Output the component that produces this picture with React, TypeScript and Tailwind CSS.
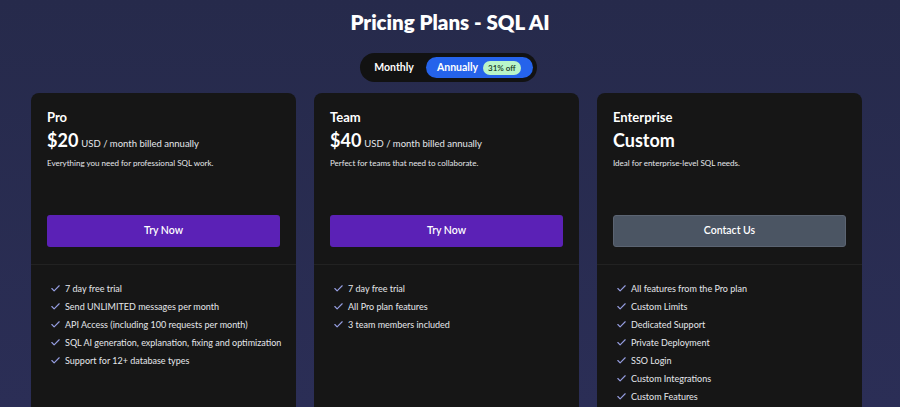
import { Check } from "lucide-react";

type Plan = {
  name: string;
  price: string;
  suffix?: string;
  blurb: string;
  cta: string;
  ctaClass: string;
  features: string[];
};

const plans: Plan[] = [
  {
    name: "Pro",
    price: "$20",
    suffix: "USD / month billed annually",
    blurb: "Everything you need for professional SQL work.",
    cta: "Try Now",
    ctaClass: "bg-[#5b21b6] text-white",
    features: [
      "7 day free trial",
      "Send UNLIMITED messages per month",
      "API Access (including 100 requests per month)",
      "SQL AI generation, explanation, fixing and optimization",
      "Support for 12+ database types",
    ],
  },
  {
    name: "Team",
    price: "$40",
    suffix: "USD / month billed annually",
    blurb: "Perfect for teams that need to collaborate.",
    cta: "Try Now",
    ctaClass: "bg-[#5b21b6] text-white",
    features: ["7 day free trial", "All Pro plan features", "3 team members included"],
  },
  {
    name: "Enterprise",
    price: "Custom",
    blurb: "Ideal for enterprise-level SQL needs.",
    cta: "Contact Us",
    ctaClass: "bg-[#4b5563] text-white border border-[#5b6472]",
    features: [
      "All features from the Pro plan",
      "Custom Limits",
      "Dedicated Support",
      "Private Deployment",
      "SSO Login",
      "Custom Integrations",
      "Custom Features",
    ],
  },
];

function PlanCard({ plan }: { plan: Plan }) {
  return (
    <div className="w-[265px] h-[330px] shrink-0 rounded-lg bg-[#161616] overflow-hidden">
      <div className="px-4 pt-[15px]">
        <h3 className="text-[13px] font-bold leading-[18px] text-white">{plan.name}</h3>
        <div className="mt-[2px] flex items-baseline gap-[3px] text-white">
          <span className="text-[18px] font-bold leading-[24px]">{plan.price}</span>
          {plan.suffix && <span className="text-[9.5px] text-gray-200">{plan.suffix}</span>}
        </div>
        <p className="mt-[5px] text-[8px] leading-[12px] text-gray-200">{plan.blurb}</p>
        <button
          className={`mt-[46px] h-[32px] w-full rounded-[3px] text-[10.5px] font-semibold ${plan.ctaClass}`}
        >
          {plan.cta}
        </button>
      </div>
      <div className="mt-[17px] border-t border-[#222222]" />
      <ul className="px-4 pt-[17px] flex flex-col gap-[5px]">
        {plan.features.map((f) => (
          <li
            key={f}
            className="flex items-center gap-[4px] pl-[3px] h-[13px] whitespace-nowrap text-[9px] text-gray-200"
          >
            <Check className="w-[11px] h-[11px] shrink-0 text-[#959de0]" strokeWidth={2.5} />
            <span>{f}</span>
          </li>
        ))}
      </ul>
    </div>
  );
}

export default function App() {
  return (
    <div
      className="h-[407px] w-full overflow-hidden bg-gradient-to-b from-[#262a4b] to-[#2b2e56]"
      style={{ fontFamily: 'Lato, "Noto Sans", sans-serif' }}
    >
      <h1 className="pt-[8px] text-center text-[20.5px] font-extrabold leading-[28px] text-white">
        Pricing Plans - SQL AI
      </h1>
      <div className="mt-[17px] flex justify-center">
        <div className="flex h-[29px] items-center rounded-full bg-[#121212] pl-[14px] pr-[4px] ml-[-3px]">
          <span className="text-[10.5px] font-bold text-white">Monthly</span>
          <div className="ml-[12px] flex h-[21px] items-center gap-[5px] rounded-full bg-[#2563eb] pl-[11px] pr-[12px]">
            <span className="text-[10.5px] font-bold text-white">Annually</span>
            <span className="rounded-full bg-[#b9f5c9] px-[5px] text-[8px] font-semibold leading-[14px] text-[#14351f]">
              31% off
            </span>
          </div>
        </div>
      </div>
      <div className="mt-[11px] flex gap-[18px] pl-[31px]">
        {plans.map((p) => (
          <PlanCard key={p.name} plan={p} />
        ))}
      </div>
    </div>
  );
}
